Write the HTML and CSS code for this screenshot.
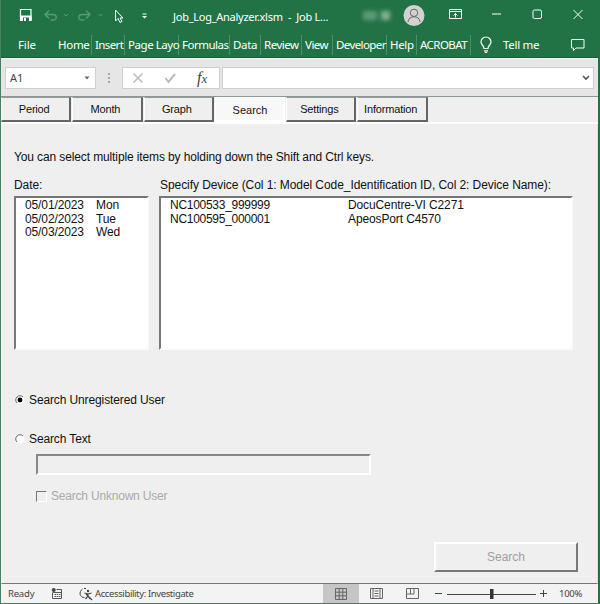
FILE: index.html
```
<!DOCTYPE html>
<html lang="en">
<head>
<meta charset="utf-8">
<title>Job_Log_Analyzer.xlsm</title>
<link rel="stylesheet" href="styles.css">
</head>
<body>
<div class="window">
  <header class="header">
    <div class="titlebar">
      <svg class="quick" width="170" height="31" viewBox="0 0 170 31" fill="none" stroke="#fff">
        <path d="M20.5 9.5h10.5v11h-10.5z" stroke-width="1.2"/><path d="M20 15.5h11.5v5h-11.5z" fill="#fff" stroke="none"/><path d="M23 17.5h6v3.5h-6z" fill="#217346" stroke="none"/><path d="M24 18h2v3h-2z" fill="#fff" stroke="none"/>
        <g stroke="#5b9877" stroke-width="1.4"><path d="M49 10.500l-4 4 4 4M45.500 14.500h7c5 0 5 5.500 0 5.500h-2M86 10.500l4 4-4 4M89.500 14.500h-7c-5 0-5 5.500 0 5.500h2"/><path d="M64 14l2 2 2-2M98.500 14l2 2 2-2" stroke-width="1"/></g>
        <path d="M115.500 10v11l2.500-2.500 2 4 2-1-2-3.500h3z"/>
        <path d="M142.500 14h4"/><path d="M142 16h5l-2.500 2.500z" fill="#fff" stroke="none"/>
      </svg>
      <span class="title">Job_Log_Analyzer.xlsm&nbsp; -&nbsp; Job L...</span>
      <span class="account"><i></i><i></i></span>
      <svg class="controls" width="200" height="31" viewBox="400 0 200 31" fill="none" stroke="#fff">
        <circle cx="414" cy="15.500" r="10.500" fill="#d2d2d2" stroke="none"/>
        <g stroke="#666"><circle cx="414" cy="12.800" r="3.700"/><path d="M408 22c0-7 12-7 12 0"/></g>
        <path d="M449.500 9.500h12v9h-12zM449.500 11.500h12M455.500 17.500v-4M453.500 15.500l2-2 2 2"/>
        <path d="M492 14h9"/><rect x="533" y="10" width="8.500" height="8.500" rx="1.500"/><path d="M573.500 10l9 9M582.500 10l-9 9"/>
      </svg>
    </div>
    <nav class="menu">
      <span class="file">File</span>
      <span class="home">Home</span>
      <span class="insert">Insert</span>
      <span class="layout">Page Layo</span>
      <span class="formulas">Formulas</span>
      <span class="data">Data</span>
      <span class="review">Review</span>
      <span class="view">View</span>
      <span class="developer">Developer</span>
      <span class="help">Help</span>
      <span class="acrobat">ACROBAT</span>
      <svg class="bulb" width="31" height="27" viewBox="471 30 31 27" fill="none" stroke="#fff" stroke-width="1.200"><path d="M484 47.500c0-3-3-3.500-3-6.500a5 5 0 0 1 10 0c0 3-3 3.500-3 6.500zM484 49.800h4M484.800 51.500h2.400"/></svg>
      <span class="tell">Tell me</span>
      <svg class="comment" width="29" height="27" viewBox="571 31 29 27" fill="none" stroke="#fff"><path d="M571.500 39.500h12.500v8.500h-8l-2.500 2.500v-2.500h-2z"/></svg>
    </nav>
  </header>

  <div class="formula-bar">
    <div class="name-box"><span>A1</span><svg width="6" height="4"><path d="M0.500 0.500h5l-2.500 3z" fill="#666"/></svg></div>
    <div class="dots"><i></i><i></i><i></i></div>
    <div class="fx">
      <svg width="60" height="20" viewBox="123 68 60 20" fill="none" stroke="#bbb" stroke-width="1.500"><path d="M133.500 73.500l9 9M142.500 73.500l-9 9"/><path d="M165.500 78l3 4 6.500-8" stroke-width="2"/></svg>
      <em>f<small>x</small></em>
    </div>
    <div class="formula"><svg width="8" height="6"><path d="M1 1l3 3 3-3" fill="none" stroke="#555" stroke-width="1.600"/></svg></div>
  </div>

  <div class="tabs">
    <div class="tab">Period</div>
    <div class="tab">Month</div>
    <div class="tab">Graph</div>
    <div class="tab active">Search</div>
    <div class="tab">Settings</div>
    <div class="tab">Information</div>
  </div>

  <main class="sheet">
    <p class="hint">You can select multiple items by holding down the Shift and Ctrl keys.</p>
    <div class="lists">
      <section class="dates">
        <h2>Date:</h2>
        <div class="listbox">
          <div class="row"><span>05/01/2023</span><span>Mon</span></div>
          <div class="row"><span>05/02/2023</span><span>Tue</span></div>
          <div class="row"><span>05/03/2023</span><span>Wed</span></div>
        </div>
      </section>
      <section class="devices">
        <h2>Specify Device (Col 1: Model Code_Identification ID, Col 2: Device Name):</h2>
        <div class="listbox">
          <div class="row"><span class="code">NC100533_999999</span><span>DocuCentre-VI C2271</span></div>
          <div class="row"><span class="code">NC100595_000001</span><span>ApeosPort C4570</span></div>
        </div>
      </section>
    </div>
    <div class="option first">
      <svg width="10" height="10" viewBox="0 0 10 10"><circle cx="5" cy="5" r="4.200" fill="#fff"/><path d="M2 8a4.200 4.200 0 0 1 6-6" fill="none" stroke="#666"/><circle cx="5" cy="5" r="2.400"/></svg>
      <span>Search Unregistered User</span>
    </div>
    <div class="option second">
      <svg width="10" height="10" viewBox="0 0 10 10"><circle cx="5" cy="5" r="4.200" fill="#fff"/><path d="M2 8a4.200 4.200 0 0 1 6-6" fill="none" stroke="#666"/></svg>
      <span>Search Text</span>
    </div>
    <div class="textbox"></div>
    <div class="unknown"><i></i><span>Search Unknown User</span></div>
    <div class="button">Search</div>
  </main>

  <footer class="status">
    <span class="ready">Ready</span>
    <svg class="macro" width="33" height="19" viewBox="46 584 33 19" fill="none" stroke="#555"><path d="M56.500 589.500h5v9h-9v-6M53 592.500h8"/><path d="M54.500 594.500h6M54.500 596.500h6" stroke-dasharray="1.500 0.700"/><circle cx="53.700" cy="590" r="2" fill="#444" stroke="none"/></svg>
    <svg class="access" width="15" height="19" viewBox="79 584 15 19" fill="none" stroke="#444"><path d="M82.500 589c-4 3-3 8.500 2 8.500M84 588.500h2"/><circle cx="88" cy="591" r="1.200" fill="#444" stroke="none"/><path d="M84.500 593l3.500 1 3.500-1M88 594v2l-2.500 3M88 596l2 3M86 594l6 6" stroke-width="1.200"/></svg>
    <span class="investigate">Accessibility: Investigate</span>
    <svg class="views" width="113" height="19" viewBox="322 584 113 19" fill="none" stroke="#666"><path d="M323 584h36v19h-36z" fill="#c6c6c6" stroke="none"/><path d="M335.500 588.500h11v11h-11zM339.200 588.500v11M342.800 588.500v11M335.500 592.200h11M335.500 595.800h11"/><path d="M370.500 588.500h12v10h-12zM373 588.500h7v10h-7zM374.500 591h4M374.500 593.500h4M374.500 596h4"/><path d="M406.500 588.500h12v10h-12zM410.500 588.500v5.500M406.500 594h7.500v-5.500"/></svg>
    <svg class="slider" width="115" height="19" viewBox="435 584 115 19" fill="none" stroke="#444"><path d="M435 593.500h7M447 594.500h89M540 593.500h7M543.500 590v7"/><path d="M490 589h3.500v10h-3.500z" fill="#333" stroke="none"/></svg>
    <span class="percent">100%</span>
  </footer>
</div>
</body>
</html>
```
FILE: styles.css
```
* { box-sizing: border-box; }
body { margin: 0; }
.window {
  width: 600px;
  height: 604px;
  display: flex;
  flex-direction: column;
  background: #efefef;
  border-left: 1px solid #46805f;
  border-right: 2px solid #217346;
  border-bottom: 1px solid #46805f;
  font-family: "Liberation Sans", sans-serif;
  color: #111;
  overflow: hidden;
}
span, h2, .hint, .tab { white-space: nowrap; }
svg { flex: none; }
.header {
  height: 58px;
  margin: 0 -2px 0 -1px;
  background: #217346;
  color: #fff;
  font-family: "Noto Sans", sans-serif;
  border-bottom: 1px solid #185c37;
  flex: none;
}
.titlebar { display: flex; height: 31px; align-items: center; }
.title { width: 190px; margin-left: 3px; font-size: 11px; letter-spacing: -0.26px; padding-top: 2px; }
.account { width: 37px; display: flex; gap: 4px; filter: blur(2px); }
.account i { width: 14px; height: 9px; background: #5e9b79; }
.account i + i { width: 9px; background: #85b298; }
.menu { display: flex; height: 26px; align-items: center; font-size: 11.500px; letter-spacing: -0.35px; }
.menu span { height: 20px; line-height: 19px; padding-left: 3px; margin-top: 1px; flex: none; border-right: 1px solid #4d8f6b; }
.menu .file { width: 55px; padding-left: 18px; border: 0; letter-spacing: -0.1px; }
.menu .home { width: 37px; letter-spacing: -0.3px; }
.menu .insert { width: 33px; letter-spacing: -0.6px; }
.menu .layout { width: 54px; letter-spacing: -0.45px; }
.menu .formulas { width: 51px; letter-spacing: -0.5px; }
.menu .data { width: 31px; }
.menu .review { width: 41px; letter-spacing: -0.5px; }
.menu .view { width: 31px; letter-spacing: -0.5px; }
.menu .developer { width: 54px; letter-spacing: -0.6px; }
.menu .help { width: 30px; }
.menu .acrobat { width: 54px; letter-spacing: -0.55px; }
.menu .tell { width: 69px; border: 0; padding-left: 1px; letter-spacing: -0.3px; }
.formula-bar {
  height: 39px;
  flex: none;
  background: #e6e6e6;
  border-top: 1px solid #f8f8f8;
  border-bottom: 1px solid #8a9a91;
  display: flex;
  align-items: center;
  padding-left: 4px;
}
.name-box, .fx, .formula { height: 22px; background: #fff; border: 1px solid #cfcfcf; display: flex; align-items: center; }
.name-box { width: 91px; justify-content: space-between; padding: 0 5px 0 4px; font: 11px "Noto Sans", sans-serif; color: #444; }
.dots { width: 26px; display: grid; justify-content: center; gap: 2px; }
.dots i { width: 2px; height: 2px; background: #aaa; }
.fx { width: 98px; }
.fx em { margin-left: 14px; font: italic 16px "Liberation Serif", serif; color: #444; }
.fx small { font-size: 13px; }
.formula { width: 372px; margin-left: 2px; justify-content: flex-end; padding-right: 3px; }
.tabs { height: 27px; flex: none; display: flex; gap: 1px; border-bottom: 2px solid #fff; }
.tab {
  width: 70.300px;
  height: 25px;
  border-top: 1px solid #999;
  border-left: 1px solid #fff;
  border-right: 2px solid #666;
  border-bottom: 2px solid #666;
  padding-right: 3px;
  font-size: 11px;
  letter-spacing: -0.18px;
  line-height: 23px;
  text-align: center;
}
.tab.active { background: #f8f8f8; border-color: #fff; letter-spacing: 0; padding: 1px 0 0 1px; }
.sheet { height: 460px; flex: none; padding: 25px 0 0 12px; font-size: 12px; letter-spacing: -0.12px; border-left: 1px solid #fafafa; border-right: 1px solid #ddd; border-bottom: 1px solid #777; }
.hint { margin: 0; line-height: 16px; letter-spacing: -0.12px; }
.lists { display: flex; gap: 10px; margin-top: 12px; }
.dates { width: 135px; }
.devices { width: 414px; }
h2 { margin: 0 0 2px; font-size: 12px; font-weight: 400; line-height: 17px; letter-spacing: -0.07px; }
.devices h2 { padding-left: 1px; }
.listbox { height: 154px; background: #fff; border: 2px solid #777; border-right: 2px solid #fafafa; border-bottom-color: #fafafa; }
.row { display: flex; height: 13.500px; line-height: 14px; padding-left: 9px; }
.dates .row span:first-child { width: 71px; }
.code { width: 178px; letter-spacing: -0.28px; }
.option { display: flex; align-items: center; height: 16px; gap: 4px; }
.option svg { margin-left: 1px; }
.first { margin-top: 42px; }
.second { margin-top: 23px; }
.textbox { width: 335px; height: 21px; margin: 7px 0 0 22px; border: 2px solid #888; border-right-color: #fff; border-bottom-color: #fff; }
.unknown { display: flex; align-items: center; height: 16px; gap: 4px; margin: 13px 0 0 22px; color: #aaa; letter-spacing: -0.2px; }
.unknown i { width: 11px; height: 11px; border: 1px solid #fff; border-top-color: #777; border-left-color: #777; }
.button { width: 144px; height: 30px; margin: 38px 0 0 420px; border: 2px solid #777; border-top-color: #fff; border-left-color: #fff; line-height: 26px; text-align: center; color: #a0a0a0; letter-spacing: 0; }
.status { height: 19px; flex: none; display: flex; align-items: center; background: #f3f3f3; font: 9.500px "Noto Sans", sans-serif; color: #444; }
.ready { width: 38px; margin-left: 7px; letter-spacing: -0.2px; }
.investigate { width: 228px; padding-left: 1px; letter-spacing: -0.38px; }
.percent { margin-left: 9px; letter-spacing: -0.3px; }
```
